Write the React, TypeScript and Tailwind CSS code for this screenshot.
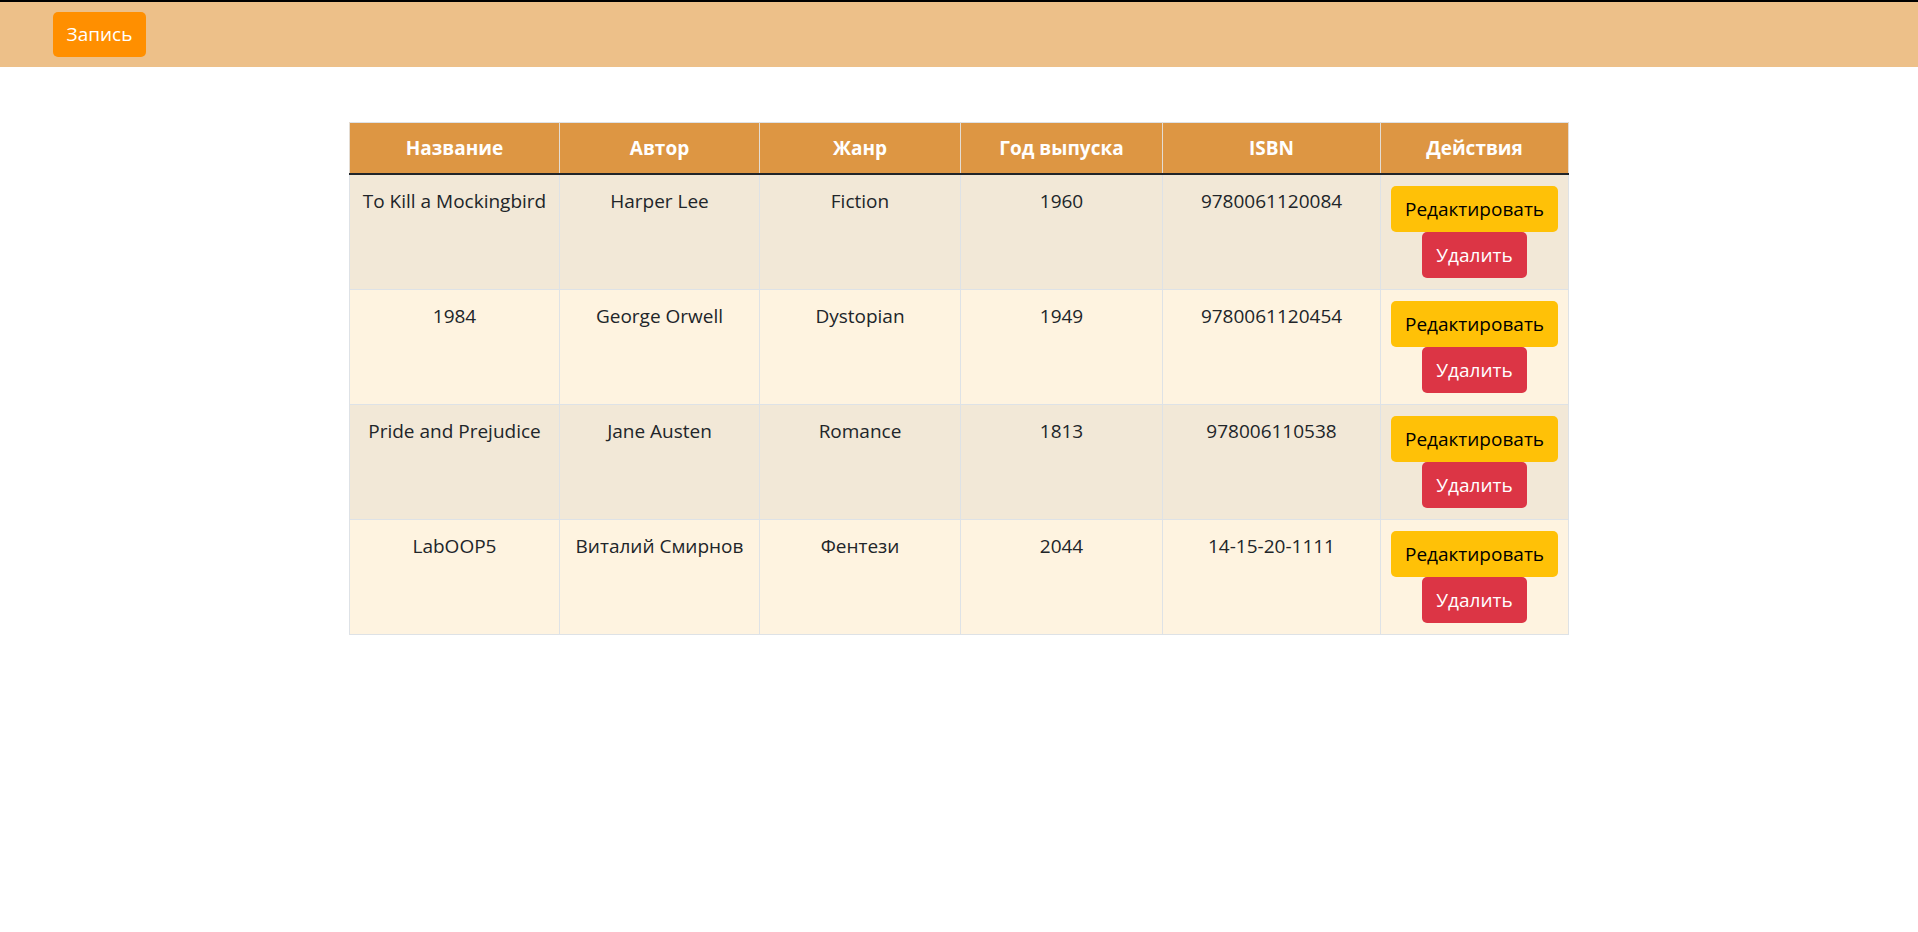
import React from "react"

type Book = {
  title: string
  author: string
  genre: string
  year: string
  isbn: string
}

const books: Book[] = [
  { title: "To Kill a Mockingbird", author: "Harper Lee", genre: "Fiction", year: "1960", isbn: "9780061120084" },
  { title: "1984", author: "George Orwell", genre: "Dystopian", year: "1949", isbn: "9780061120454" },
  { title: "Pride and Prejudice", author: "Jane Austen", genre: "Romance", year: "1813", isbn: "978006110538" },
  { title: "LabOOP5", author: "Виталий Смирнов", genre: "Фентези", year: "2044", isbn: "14-15-20-1111" },
]

const headers = ["Название", "Автор", "Жанр", "Год выпуска", "ISBN", "Действия"]

export default function App() {
  return (
    <div
      className="min-h-screen bg-white text-[#212529] text-[19px] leading-[29px]"
      style={{ fontFamily: '"Open Sans", "Noto Sans", sans-serif' }}
    >
      <header className="h-[67px] border-t-2 border-black bg-[#edc089] flex items-start pl-[53px] pt-[10px]">
        <button className="h-[45px] w-[93px] rounded-[5px] bg-[#ff8f00] text-white">
          Запись
        </button>
      </header>

      <main className="pt-[55px]">
        <table className="mx-auto w-[1219px] table-fixed border-collapse border border-[#dee2e6]">
          <colgroup>
            <col className="w-[210px]" />
            <col className="w-[200px]" />
            <col className="w-[201px]" />
            <col className="w-[202px]" />
            <col className="w-[218px]" />
            <col className="w-[188px]" />
          </colgroup>
          <thead>
            <tr className="bg-[#dd9643] border-b-2 border-[#212529]">
              {headers.map((h) => (
                <th
                  key={h}
                  className="border-x border-[#e4dcd2] px-[10px] pt-[11px] pb-[10px] text-center font-bold text-white"
                >
                  {h}
                </th>
              ))}
            </tr>
          </thead>
          <tbody>
            {books.map((b, i) => (
              <tr
                key={b.isbn}
                className={i % 2 === 0 ? "bg-[#f2e8d7]" : "bg-[#fef3e0]"}
              >
                <td className="border border-[#dee2e6] px-[10px] pt-[12px] text-center align-top">{b.title}</td>
                <td className="border border-[#dee2e6] px-[10px] pt-[12px] text-center align-top">{b.author}</td>
                <td className="border border-[#dee2e6] px-[10px] pt-[12px] text-center align-top">{b.genre}</td>
                <td className="border border-[#dee2e6] px-[10px] pt-[12px] text-center align-top">{b.year}</td>
                <td className="border border-[#dee2e6] px-[10px] pt-[12px] text-center align-top">{b.isbn}</td>
                <td className="border border-[#dee2e6] px-[10px] pt-[11px] pb-[11px] align-top">
                  <div className="flex flex-col items-center">
                    <button className="h-[46px] w-[167px] rounded-[5px] bg-[#ffc107] text-black">
                      Редактировать
                    </button>
                    <button className="h-[46px] w-[105px] rounded-[5px] bg-[#dc3545] text-white">
                      Удалить
                    </button>
                  </div>
                </td>
              </tr>
            ))}
          </tbody>
        </table>
      </main>
    </div>
  )
}
